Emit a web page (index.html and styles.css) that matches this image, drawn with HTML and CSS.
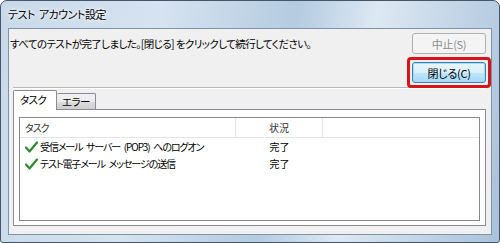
FILE: index.html
```html
<!DOCTYPE html>
<html lang="ja">
<head>
    <meta charset="UTF-8">
    <title>テスト アカウント設定</title>
    <link rel="stylesheet" href="styles.css">
</head>
<body>
    <div class="window">
        <div class="titlebar">テスト アカウント設定</div>

        <div class="client">
            <div class="top-row">
                <div class="message">すべてのテストが完了しました。[閉じる] をクリックして続行してください。</div>
                <button class="btn" disabled>中止(S)</button>
            </div>

            <div class="close-row">
                <div class="highlight-wrap">
                    <button class="btn btn-default">閉じる(C)</button>
                    <div class="highlight"></div>
                </div>
            </div>

            <div class="separator"></div>

            <div class="tabs">
                <div class="tab active">タスク</div>
                <div class="tab">エラー</div>
            </div>

            <div class="panel">
                <div class="list">
                    <div class="list-head">
                        <div class="col-task">タスク</div>
                        <div class="col-state">状況</div>
                        <div class="col-rest"></div>
                    </div>
                    <div class="list-row">
                        <div class="col-task">
                            <svg class="check" width="13" height="12" viewBox="0 0 13 12">
                                <path d="M1 6.5 L4.5 10.5 L12 1.5" fill="none" stroke="#2f8a2f" stroke-width="2.2" stroke-linecap="round" stroke-linejoin="round"/>
                            </svg>
                            <span>受信メール サーバー (POP3) へのログオン</span>
                        </div>
                        <div class="col-state">完了</div>
                    </div>
                    <div class="list-row">
                        <div class="col-task">
                            <svg class="check" width="13" height="12" viewBox="0 0 13 12">
                                <path d="M1 6.5 L4.5 10.5 L12 1.5" fill="none" stroke="#2f8a2f" stroke-width="2.2" stroke-linecap="round" stroke-linejoin="round"/>
                            </svg>
                            <span>テスト電子メール メッセージの送信</span>
                        </div>
                        <div class="col-state">完了</div>
                    </div>
                </div>
            </div>
        </div>
    </div>
</body>
</html>
```

FILE: styles.css
```css
* {
    margin: 0;
    padding: 0;
    box-sizing: border-box;
}

body {
    font-family: "Noto Sans CJK JP", "Noto Sans", sans-serif;
    font-feature-settings: "palt";
    font-size: 10.5px;
    letter-spacing: -0.6px;
    color: #000;
    background: #fff;
}

.window {
    width: 500px;
    height: 243px;
    display: flex;
    flex-direction: column;
    padding: 0 7px 7px;
    border: 1px solid #44566b;
    border-radius: 7px 7px 3px 3px;
    background: linear-gradient(100deg, #c9d9e9 0%, #d6e3f0 30%, #b4cbe0 55%, #dde8f2 70%, #a9c2da 100%);
}

.titlebar {
    height: 27px;
    line-height: 26px;
    font-size: 11px;
    letter-spacing: -0.5px;
    word-spacing: 2px;
    text-shadow: 0 0 6px #fff, 0 0 3px #fff;
}

.client {
    flex: 1;
    display: flex;
    flex-direction: column;
    padding: 4px 5px 8px 1px;
    background: #f0f0f0;
    border: 1px solid #7e93a8;
}

.top-row {
    display: flex;
    justify-content: space-between;
    align-items: center;
    height: 21px;
}

.message {
    white-space: nowrap;
}

.btn {
    width: 74px;
    height: 21px;
    font-family: inherit;
    font-feature-settings: "palt";
    font-size: 11px;
    letter-spacing: -0.3px;
    color: #000;
    border: 1px solid #707070;
    border-radius: 3px;
    background: linear-gradient(#f2f2f2 0%, #ebebeb 50%, #dddddd 51%, #cfcfcf 100%);
}

.btn:disabled {
    color: #8d8d8d;
    border-color: #adb2b5;
    background: #f4f4f4;
}

.btn-default {
    border-color: #3c7fb1;
    background: linear-gradient(#eaf6fd 0%, #d9f0fc 50%, #bee6fd 51%, #a7d9f5 100%);
    box-shadow: inset 0 0 0 1px #a6dcf6;
}

.close-row {
    display: flex;
    justify-content: flex-end;
    margin-top: 8px;
}

.highlight-wrap {
    position: relative;
    height: 21px;
}

.highlight {
    position: absolute;
    left: -5px;
    top: -5px;
    right: -5px;
    bottom: -5px;
    border: 3px solid #d7141a;
    border-radius: 4px;
}

.separator {
    margin-top: 4px;
    margin-left: 3px;
    border-top: 1px solid #b9b9b9;
    border-bottom: 1px solid #fff;
}

.tabs {
    display: flex;
    align-items: flex-end;
    margin-top: 1px;
    margin-left: 3px;
    height: 19px;
    position: relative;
    z-index: 1;
}

.tab {
    width: 39px;
    height: 16px;
    line-height: 15px;
    padding-left: 5px;
    white-space: nowrap;
    border: 1px solid #898c95;
    border-bottom: none;
    border-left: none;
    background: linear-gradient(#f2f2f2 0%, #ebebeb 50%, #dddddd 51%, #cfcfcf 100%);
    border-radius: 2px 2px 0 0;
}

.tab.active {
    width: 44px;
    height: 20px;
    line-height: 18px;
    margin-bottom: -1px;
    padding-left: 6px;
    border-left: 1px solid #898c95;
    background: #fff;
}

.panel {
    flex: 1;
    margin-left: 3px;
    padding: 7px 5px 4px;
    border: 1px solid #898c95;
    background: #fff;
}

.list {
    height: 100%;
    border: 1px solid #828790;
    background: #fff;
    font-size: 10px;
    letter-spacing: -1.1px;
    word-spacing: 2.5px;
}

.list-head {
    display: flex;
    height: 20px;
    line-height: 19px;
    border-bottom: 1px solid #e5e5e5;
    color: #333;
}

.list-head > div {
    border-right: 1px solid #e5e5e5;
}

.list-head .col-rest {
    flex: 1;
    border-right: none;
}

.col-task {
    width: 216px;
    padding-left: 5px;
    display: flex;
    align-items: center;
    white-space: nowrap;
}

.col-state {
    width: 87px;
    text-align: center;
    letter-spacing: 0;
}

.list-row {
    display: flex;
    height: 17px;
    line-height: 17px;
}

.check {
    margin-right: 2px;
    flex-shrink: 0;
}
```
